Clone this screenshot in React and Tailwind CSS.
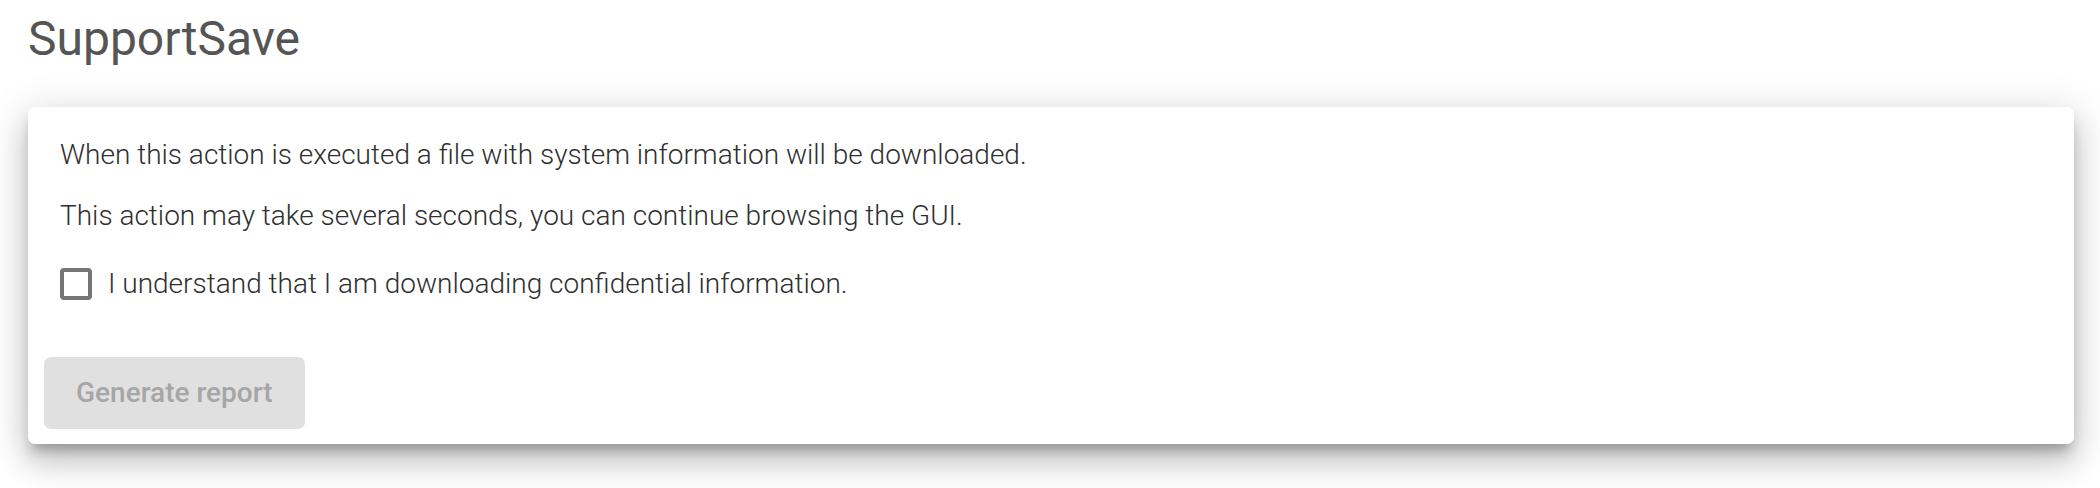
import { useState } from 'react';

export default function App() {
  const [accepted, setAccepted] = useState(false);

  return (
    <div className="min-h-screen bg-white pl-[28px] pr-[26px] pt-[11px] pb-[40px] font-['Roboto','Liberation_Sans',sans-serif]">
      <h1 className="text-[48px] leading-[56px] font-normal text-[#555555]">SupportSave</h1>

      {/* Card */}
      <div className="mt-[40px] bg-white rounded-[7px] shadow-[0_10px_12px_-4px_rgba(0,0,0,0.25),0_18px_28px_2px_rgba(0,0,0,0.14),0_8px_40px_6px_rgba(0,0,0,0.12)]">
        <div className="pt-[28px] px-[32px] text-[28px] leading-[40px] font-light text-[#303030]">
          <p>When this action is executed a file with system information will be downloaded.</p>
          <p className="mt-[21px]">This action may take several seconds, you can continue browsing the GUI.</p>

          <label className="mt-[28px] flex items-center gap-[16px] cursor-pointer">
            <span
              onClick={() => setAccepted(!accepted)}
              className={
                accepted
                  ? 'w-[32px] h-[32px] rounded-[4px] border-[4px] border-[#3f51b5] bg-[#3f51b5] flex items-center justify-center'
                  : 'w-[32px] h-[32px] rounded-[4px] border-[4px] border-[#757575] bg-white'
              }
            >
              {accepted && (
                <svg viewBox="0 0 24 24" className="w-[26px] h-[26px]" fill="none" stroke="white" strokeWidth="3">
                  <path d="M4 12.5l5 5L20 6.5" />
                </svg>
              )}
            </span>
            <span>I understand that I am downloading confidential information.</span>
          </label>
        </div>

        {/* Actions */}
        <div className="mt-[53px] px-[16px] pb-[15px]">
          <button
            disabled={!accepted}
            className={
              accepted
                ? 'h-[72px] px-[32px] rounded-[7px] bg-[#3f51b5] text-white text-[28px] font-medium'
                : 'h-[72px] px-[32px] rounded-[7px] bg-[#e0e0e0] text-[#a6a6a6] text-[28px] font-medium'
            }
          >
            Generate report
          </button>
        </div>
      </div>
    </div>
  );
}
